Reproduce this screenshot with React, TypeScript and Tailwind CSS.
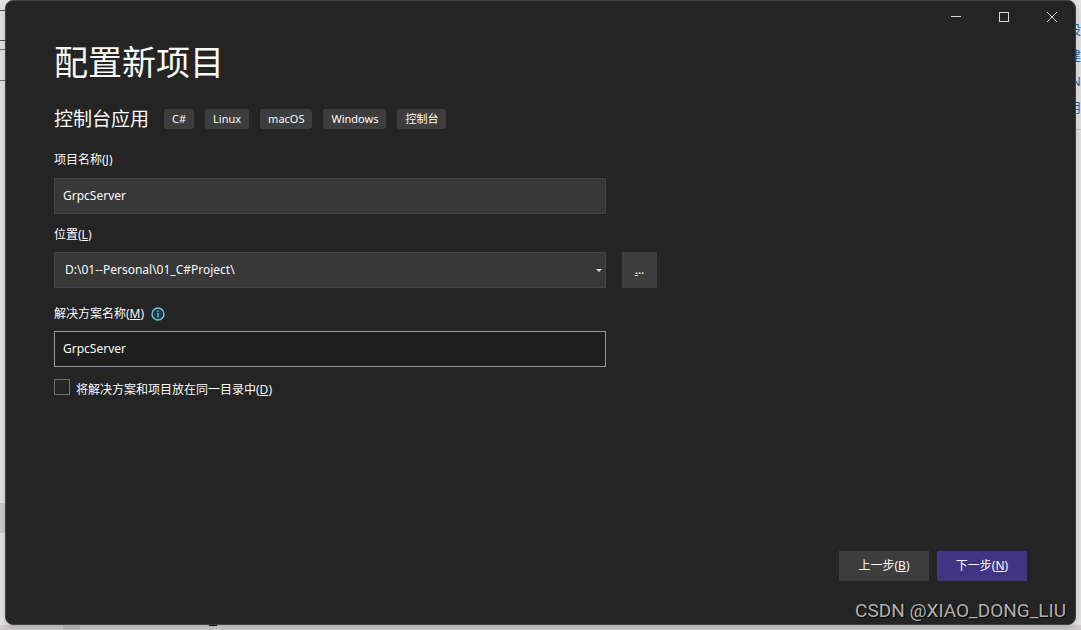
import { useState } from "react";
import type { ReactNode } from "react";

const tags = ["C#", "Linux", "macOS", "Windows", "控制台"];

const behindRight = ["设", "建", "N", "用"];

function CaptionButton({ label, children }: { label: string; children: ReactNode }) {
  return (
    <button
      type="button"
      aria-label={label}
      className="flex h-8 w-12 items-center justify-center text-[#d6d6d6] hover:bg-[#3d3d3d]"
    >
      <svg width="12" height="12" viewBox="0 0 12 12" fill="none" stroke="currentColor">
        {children}
      </svg>
    </button>
  );
}

function TitleBar() {
  return (
    <header className="-mr-px flex justify-end">
      <CaptionButton label="最小化">
        <path d="M1 5.5h10" shapeRendering="crispEdges" />
      </CaptionButton>
      <CaptionButton label="最大化">
        <path d="M1.5 1.5h9v9h-9z" shapeRendering="crispEdges" />
      </CaptionButton>
      <CaptionButton label="关闭">
        <path d="M1 1l10 10M11 1L1 11" />
      </CaptionButton>
    </header>
  );
}

function InfoIcon() {
  return (
    <svg width="14" height="14" viewBox="0 0 14 14" fill="none" aria-hidden="true">
      <circle cx="7" cy="7" r="6" fill="#233940" stroke="#66c5e3" strokeWidth="1.4" />
      <path d="M7 6v4.5M7 3.4v1.5" stroke="#66c5e3" strokeWidth="1.3" />
    </svg>
  );
}

export default function App() {
  const [projectName, setProjectName] = useState("GrpcServer");
  const [solutionName, setSolutionName] = useState("GrpcServer");
  const [sameFolder, setSameFolder] = useState(false);

  return (
    <div className="grid min-h-screen grid-cols-[5px_minmax(0,1fr)_5px] grid-rows-[1fr_5px] overflow-hidden bg-[#e6e5e6] font-['Noto_Sans','Noto_Sans_CJK_SC',sans-serif] text-xs text-[#fafafa]">
      <div aria-hidden="true" className="flex flex-col">
        <div className="mt-2.5 h-[31px] border-y border-[#555]" />
        <div className="mt-2 h-8 border-y border-[#777]" />
        <div className="mt-auto mb-[92px] h-[30px] bg-[#cfcfcf]" />
      </div>

      <div className="relative flex flex-col rounded-lg border border-[#434343] bg-[#242424] shadow-[0_2px_10px_rgba(0,0,0,0.2)]">
        <TitleBar />

        <main className="flex flex-1 flex-col px-12 pt-[5px] pb-[43px]">
          <h1 className="text-[34px] leading-[48px]">配置新项目</h1>

          <div className="mt-[23px] flex items-center">
            <h2 className="mr-[15px] text-[19px] leading-5">控制台应用</h2>
            <ul className="flex gap-[11px] text-[11px]">
              {tags.map((tag) => (
                <li key={tag} className="rounded-[3px] bg-[#3d3d3d] px-2 leading-5">
                  {tag}
                </li>
              ))}
            </ul>
          </div>

          <form className="mt-[21px] flex max-w-[603px] flex-col" onSubmit={(e) => e.preventDefault()}>
            <label htmlFor="project" className="leading-5">
              项目名称(<u>J</u>)
            </label>
            <input
              id="project"
              value={projectName}
              onChange={(e) => setProjectName(e.target.value)}
              className="mt-2 mr-[51px] h-9 border border-[#434343] bg-[#383838] px-2 pb-0.5 outline-none"
            />

            <label htmlFor="location" className="mt-[11px] leading-5">
              位置(<u>L</u>)
            </label>
            <div className="mt-[7px] flex gap-4">
              <div className="relative flex-1">
                <select
                  id="location"
                  className="h-9 w-full appearance-none border border-[#434343] bg-[#383838] px-2.5 outline-none"
                >
                  <option>D:\01--Personal\01_C#Project\</option>
                </select>
                <svg
                  width="6"
                  height="3"
                  viewBox="0 0 6 3"
                  className="pointer-events-none absolute top-[17px] right-1"
                  aria-hidden="true"
                >
                  <path d="M0 0h6L3 3z" fill="#e0e0e0" />
                </svg>
              </div>
              <button type="button" aria-label="浏览" className="h-9 w-[35px] bg-[#3d3d3d] hover:bg-[#4a4a4a]">
                <u>.</u>..
              </button>
            </div>

            <div className="mt-4 flex items-center gap-[7px]">
              <label htmlFor="solution" className="leading-5">
                解决方案名称(<u>M</u>)
              </label>
              <InfoIcon />
            </div>
            <input
              id="solution"
              value={solutionName}
              onChange={(e) => setSolutionName(e.target.value)}
              className="mt-[7px] mr-[51px] h-9 border border-[#999] bg-[#1f1f1f] px-2 pb-0.5 outline-none"
            />

            <label className="mt-3 flex items-start gap-1.5 leading-[22px]">
              <input
                type="checkbox"
                checked={sameFolder}
                onChange={(e) => setSameFolder(e.target.checked)}
                className="size-4 appearance-none border border-[#707070] bg-[#262626] checked:bg-[#413484]"
              />
              <span>
                将解决方案和项目放在同一目录中(<u>D</u>)
              </span>
            </label>
          </form>

          <footer className="mt-auto flex justify-end gap-2">
            <button type="button" className="h-[30px] w-[90px] bg-[#3d3d3d] hover:bg-[#4a4a4a]">
              上一步(<u>B</u>)
            </button>
            <button type="button" className="h-[30px] w-[90px] bg-[#413484] hover:bg-[#4f40a0]">
              下一步(<u>N</u>)
            </button>
          </footer>
        </main>

        <p className="absolute right-[9px] bottom-0 font-[Roboto,sans-serif] text-[19px] leading-[26px] text-[#b0b0b0] [text-shadow:1px_1px_1px_#000]">
          CSDN @XIAO_DONG_LIU
        </p>
      </div>

      <div aria-hidden="true" className="flex flex-col overflow-hidden pt-[17px] text-[13px] text-[#1767b0]">
        {behindRight.map((text) => (
          <span key={text} className="flex h-[26px] items-center justify-end">
            {text}
          </span>
        ))}
        <div className="mt-2 border-t border-[#cbcbcb]" />
      </div>

      <div aria-hidden="true" className="col-span-3 flex bg-[#cfcdce]">
        <div className="ml-[63px] w-[17px] bg-[#bdbdbd]" />
        <div className="ml-[129px] h-px w-2 bg-black" />
      </div>
    </div>
  );
}
